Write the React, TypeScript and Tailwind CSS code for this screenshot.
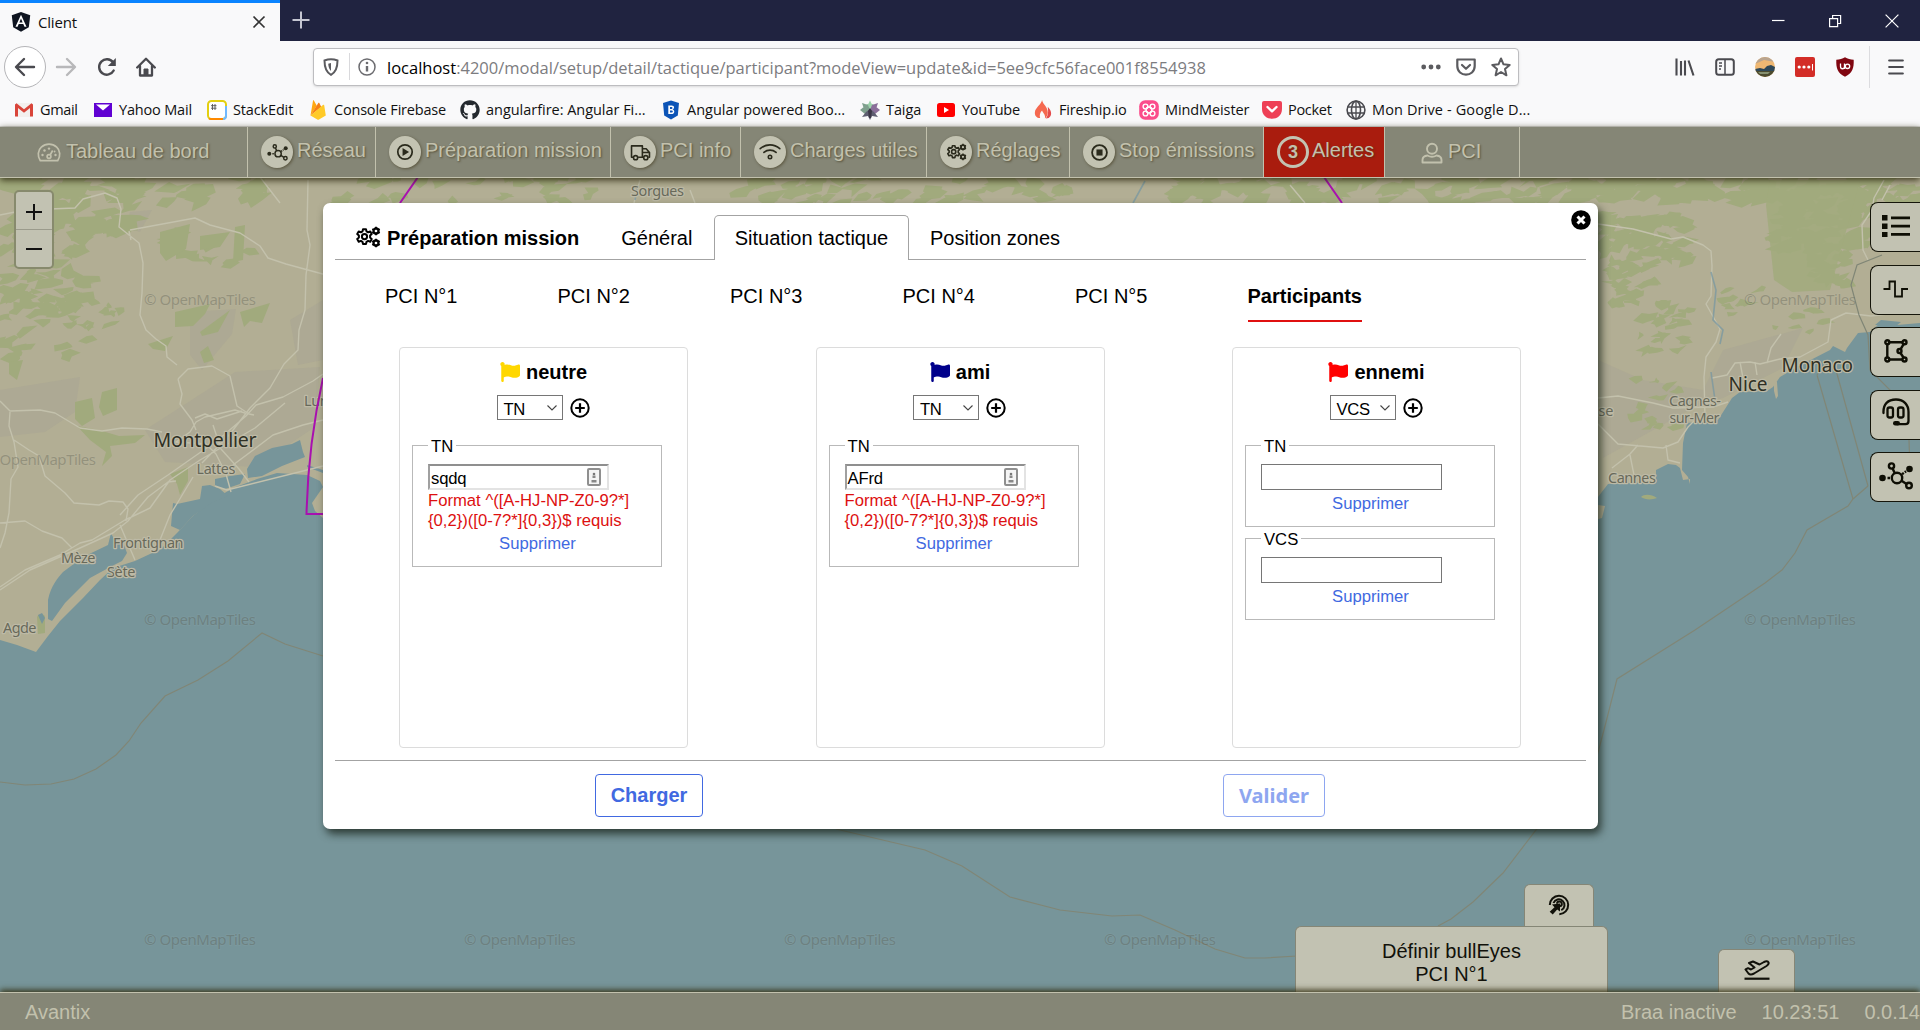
import React from "react";
import { FaGithub, FaFlag } from "react-icons/fa";

type IconProps = { className?: string };

/* ---------- line icons ---------- */

const Gears = ({ className = "w-5 h-5" }: IconProps) => (
  <svg viewBox="0 0 26 22" className={className} fill="none" stroke="currentColor" strokeWidth="2">
    <path d="M8 3.2h3l.5 2.2 1.6.9 2.2-.8 1.4 2.6-1.6 1.5v2l1.6 1.5-1.4 2.6-2.2-.8-1.6.9-.5 2.2H8l-.5-2.2-1.6-.9-2.2.8-1.5-2.6 1.7-1.5v-2L2.200 8.100l1.500-2.600 2.200.8 1.600-.9z" strokeLinejoin="round" />
    <circle cx="9.500" cy="10.600" r="2.600" />
    <circle cx="21" cy="5" r="2.500" strokeWidth="2.300" />
    <circle cx="21" cy="17" r="2.500" strokeWidth="2.300" />
    <path d="M21 .8v1.500M21 7.700v1.500M17.300 2.900l1.300.8M23.400 6.300l1.300.8M17.300 7.100l1.300-.8M23.400 3.700l1.300-.8M21 12.800v1.500M21 19.700v1.500M17.300 14.900l1.300.8M23.400 18.300l1.300.8M17.300 19.100l1.300-.8M23.400 15.700l1.300-.8" strokeWidth="1.800" />
  </svg>
);

const Network = ({ className = "w-5 h-5" }: IconProps) => (
  <svg viewBox="0 0 34 28" className={className} fill="none" stroke="currentColor" strokeWidth="2.400">
    <circle cx="18" cy="16" r="5.200" />
    <circle cx="12.500" cy="4" r="2.600" />
    <circle cx="30" cy="23.500" r="2.800" />
    <circle cx="3.500" cy="16" r="3.300" fill="currentColor" stroke="none" />
    <circle cx="30.500" cy="7" r="3.300" fill="currentColor" stroke="none" />
    <path d="M13.600 6.500l2.200 4.800M22.600 18.700l4.900 3.200M8.500 16h2.500M23 12.200l1.800-1.300" />
    <path d="M25.800 10.200l1.200-.9" />
  </svg>
);

const Play = ({ className = "w-5 h-5" }: IconProps) => (
  <svg viewBox="0 0 20 20" className={className}>
    <circle cx="10" cy="10" r="8" fill="none" stroke="currentColor" strokeWidth="1.900" />
    <path d="M7.300 5.600v8.800l7.200-4.400z" fill="currentColor" />
  </svg>
);

const Stop = ({ className = "w-5 h-5" }: IconProps) => (
  <svg viewBox="0 0 20 20" className={className}>
    <circle cx="10" cy="10" r="7.800" fill="none" stroke="currentColor" strokeWidth="1.900" />
    <rect x="6.800" y="6.800" width="6.400" height="6.400" fill="currentColor" />
  </svg>
);

const Truck = ({ className = "w-5 h-5" }: IconProps) => (
  <svg viewBox="0 0 22 18" className={className} fill="none" stroke="currentColor" strokeWidth="1.700">
    <path d="M3.200 14H1.500V2h11.500v12H8.500M13 5h4l3.500 4v5h-1.200M14 14h-1M13 9h7" strokeLinejoin="round" />
    <circle cx="5.800" cy="14.500" r="2.200" />
    <circle cx="16.600" cy="14.500" r="2.200" />
  </svg>
);

const Wifi = ({ className = "w-5 h-5" }: IconProps) => (
  <svg viewBox="0 0 22 18" className={className} fill="none" stroke="currentColor" strokeWidth="1.600" strokeLinecap="round">
    <path d="M1.200 5.700C6.900.6 15.100.6 20.800 5.700M4.900 9.400c3.600-3 8.600-3 12.200 0" />
    <circle cx="11" cy="14" r="1.700" />
  </svg>
);

const Gauge = ({ className = "w-6 h-6" }: IconProps) => (
  <svg viewBox="0 0 24 20" className={className} fill="none" stroke="currentColor" strokeWidth="1.700">
    <path d="M3.300 17.700C.2 13 .8 7.300 4.300 4.200c4.500-4 11-4 15.400 0 3.500 3.100 4.100 8.800 1 13.500z" strokeLinejoin="round" />
    <circle cx="12" cy="13.500" r="1.900" />
    <path d="M13.100 12l2.600-4.500" />
    <g fill="currentColor" stroke="none">
      <circle cx="5.500" cy="12" r="1.200" /><circle cx="7.500" cy="7.500" r="1.200" /><circle cx="12" cy="5.600" r="1.200" /><circle cx="18.500" cy="12" r="1.200" /><circle cx="17.600" cy="8.500" r=".9" />
    </g>
  </svg>
);

const Person = ({ className = "w-5 h-5" }: IconProps) => (
  <svg viewBox="0 0 22 22" className={className} fill="none" stroke="currentColor" strokeWidth="1.900">
    <circle cx="11" cy="6.800" r="5" />
    <path d="M6.500 13.500c-3 .3-5 2-5 4.500v2.500h19V18c0-2.500-2-4.200-5-4.500-2.700 1.600-6.300 1.600-9 0z" strokeLinejoin="round" />
  </svg>
);

const PlusCircle = () => (
  <svg viewBox="0 0 20 20" className="h-5 w-5" fill="none" stroke="black">
    <circle cx="10" cy="10" r="8.700" strokeWidth="2" />
    <path d="M10 5.200v9.600M5.200 10h9.600" strokeWidth="2.200" />
  </svg>
);

/* ---------- map ---------- */

function mulberry(seed: number) {
  let a = seed;
  return () => {
    a = (a + 0x6d2b79f5) | 0;
    let t = Math.imul(a ^ (a >>> 15), 1 | a);
    t = (t + Math.imul(t ^ (t >>> 7), 61 | t)) ^ t;
    return ((t ^ (t >>> 14)) >>> 0) / 4294967296;
  };
}

/* Scattered woodland patches: [x, y, width, height, count, size] */
const woods: number[][] = [
  [0, 177, 130, 60, 60, 22], [0, 230, 95, 80, 40, 17], [0, 290, 70, 70, 20, 15], [70, 290, 50, 50, 12, 11],
  [130, 178, 130, 24, 18, 18], [160, 230, 105, 34, 10, 15], [325, 177, 270, 26, 26, 15], [740, 177, 330, 26, 46, 16],
  [1180, 177, 420, 26, 80, 20], [1598, 178, 170, 20, 40, 22], [1605, 215, 85, 50, 44, 17], [1602, 265, 60, 40, 24, 14],
  [1630, 305, 60, 50, 20, 12], [1770, 180, 100, 70, 70, 18], [1810, 240, 35, 45, 30, 13], [1850, 177, 70, 40, 30, 18],
  [1720, 290, 40, 30, 9, 11], [1765, 310, 65, 24, 7, 10], [1628, 375, 50, 55, 13, 11], [1770, 220, 30, 25, 6, 12],
];

function woodlandPath() {
  const rnd = mulberry(29);
  let d = "";
  for (const [x, y, w, h, n, s] of woods) {
    for (let i = 0; i < n; i++) {
      const cx = x + rnd() * w;
      const cy = y + rnd() * h;
      const pts = 5 + Math.floor(rnd() * 4);
      for (let k = 0; k < pts; k++) {
        const ang = (k / pts) * Math.PI * 2 + rnd() * 0.6;
        const r = s * (0.15 + rnd() * 0.85);
        const px = cx + Math.cos(ang) * r - Math.sin(ang) * r * 0.3;
        const py = cy + Math.sin(ang) * r * 0.55;
        d += (k ? "L" : "M") + px.toFixed(1) + " " + py.toFixed(1);
      }
      d += "Z";
    }
  }
  return d;
}

const woodland = woodlandPath();

const watermarks = [
  [144, 305], [-16, 465], [1744, 305], [144, 625], [1744, 625], [144, 945], [464, 945], [784, 945], [1104, 945], [1744, 945],
];

type Place = { t: string; x: number; y: number; s: number; c: string; w: number };
const places: Place[] = [
  { t: "Montpellier", x: 153.500, y: 447, s: 19.500, c: "#2f3024", w: 103 },
  { t: "Lattes", x: 196.500, y: 474, s: 14.500, c: "#68695a", w: 39 },
  { t: "Frontignan", x: 113, y: 547.500, s: 14.500, c: "#68695a", w: 70.500 },
  { t: "Mèze", x: 61, y: 562.500, s: 14.500, c: "#68695a", w: 34.500 },
  { t: "Sète", x: 107, y: 577, s: 14.500, c: "#68695a", w: 28.500 },
  { t: "Agde", x: 3, y: 632.500, s: 14.500, c: "#68695a", w: 33.500 },
  { t: "Lunel", x: 304, y: 405.500, s: 14.500, c: "#68695a", w: 36 },
  { t: "Sorgues", x: 631, y: 195.500, s: 14.500, c: "#68695a", w: 53 },
  { t: "Monaco", x: 1781.500, y: 371.500, s: 19, c: "#2f3024", w: 71.500 },
  { t: "Nice", x: 1728.500, y: 390.500, s: 19, c: "#2f3024", w: 39 },
  { t: "Cagnes-", x: 1669, y: 405.500, s: 14.500, c: "#68695a", w: 52 },
  { t: "sur-Mer", x: 1669.500, y: 422.500, s: 14.500, c: "#68695a", w: 50 },
  { t: "Cannes", x: 1608, y: 482.500, s: 14.500, c: "#68695a", w: 48 },
  { t: "Grasse", x: 1568, y: 415.500, s: 14.500, c: "#68695a", w: 45.500 },
];

const MapView = () => (
  <svg viewBox="0 178 1920 814" className="absolute inset-0 h-full w-full" preserveAspectRatio="none">
    <rect y="177" width="1920" height="815" fill="#77959a" />
    <path d="M0 177H1920V323L1897 325 1880 323 1870 332 1858 333 1847 348 1845 352 1833 346 1830 350 1797 367 1780 377 1773 387 1767 391 1740 392 1732 398 1718 420 1687 423 1683 443 1682 470 1688 477 1690 484 1690 479 1683 480 1680 468 1676 465 1668 464 1656 470 1656 482 1608 484 1598 497 1598 520H330L323 518 315 511 312 503 323 487 320 481 307 475 277 473 257 479 233 488 213 500 193 516 177 533 160 550 150 554 135 561 113 568 100 580 83 598 60 621 48 636 36 652 17 645 0 640Z" fill="#b2ae94" />
    <g fill="#aba893">
      <path d="M0 390l80-13-5 35-30 20-45 5zM130 212l22-2-12 22-14-4zM190 312l46-3-4 25-30 36-12-15zM290 320l33-20v60l-25 5zM145 430l90-58 85-5-5 60-60 40-90-5z" opacity=".8" />
      <path d="M1598 360l45 20 60 10 20-40 80-22-20 40-60 30-30 10-90 50z" opacity=".8" />
    </g>
    <path d={woodland} fill="#a1aa7d" />
    <g fill="#a1aa7d">
      <path d="M1770 180h90l-30 110-38 2-18-12-8-75z" opacity=".85" />
      <path d="M75 402l17-4 3 20-13 8-7-7zM102 392l15-4v22l-14 6-4-9zM77 426l22 4 20 6 26-1-10 8-25 3 2 10-10 10 4-14-16-12zM175 312l35-8-5 10-12 12-18 1zM200 332l30-22-12 22-16 4zM240 312l30-9-8 20-12-2-6 6zM148 344l25-8-8 15-12-2zM160 232l30-8-4 25-20 12-6-8zM200 236l30-4-10 15-20 3zM9 362l14-2-6 20-8-6z" />
      <path d="M235 227l10-2-2 35-10 2zM200 352l8-6 6 14-10 3zM170 474l18-7v14l-8 14-3-11z" />
      <path d="M37 617c2-4 8-3 8 0v16l-7 1zM1641 497c3-3 10-3 16 1-5 2-12 2-16-1z" />
    </g>
    <g fill="#77959a">
      <path d="M247 469l8-13 17-8 20-4 8-4 3 12 2 5-23 9-20 10-14 2zM215 479l15-3 15-2-5 10-15 5-10-3zM173 503l4 1 23-5 2-13 8-1 10 4 8 7-15 6-20 14-13 14-9-4zM48 600c3-15 10-22 15-28l20-15 25-12 3-12 5 10 8 2 3 8-5 8-10 5-22 12-25 25-13 18-4-2zM307 467l16 6v-3l-16-5z" />
      <path d="M38 615l4-2 3 5-3 6zM1875 325l6-5 20 2-5 4z" />
    </g>
    <path d="M1774 380l3 2 1 14-2 3-2-8zM1598 505l7 1-3 12-4 1z" fill="#b2ae94" />
    <g fill="none" stroke="#c3c1ac" strokeWidth="1.400" strokeLinejoin="round">
      <path d="M0 215l25-5 50-2 8-9 22-6 12 5 4 11-2 18 10 8 10 8 4 20-1 30-2 22 6 15 10 9 10 7 1 11 10 8M130 230l65-12 15 7 30 8 20 13 8 12 18 6 22 6 22 6h13M129 231l2 9M308 180l-1 50 3 15-4 30-1 35-6 20-1 20-14 14-14 24-20 20-20 26-28 29M178 379l10-10 24-3 18 10 7 30 12 8 5 1M178 379l4 15-2 10 12 16 4 10M0 401l10 10 30-1 15 3 25 15 22 3 20-3 25 1 15 3M10 412l-1 14 5 16 4 25-7 12-2 34-4 20-5 15M14 440l15 10 10 6 6 20 20 17 9 10 25 2 10-4 14 1 5 7-2 12M0 587l25-17 35-15 20-12 12-3 33-20 25-12 20-28 30-20 55-32 30-25M0 590l30-20 50-22 33-15 15-12 20-24 20-15 8-1M120 515l18-20 30-20 50-35 28-24 10-11 27-8 30-16 10-7M245 413l-10-3-30 7-9 5-6 10-14 10 30 2 10 10 10 20 5 18M195 418l10-4 12 5 25-8M213 425l8 24 18 20 10 13M160 540l10-25 8-13 15-25M215 486l12 4 100-25M120 525l15 35M0 523l25-2 17 10 20 7 10 10" />
      <path d="M323 420l-20 5-30 10-40 30" />
      <path d="M1598 224l35 5 38 10 12-2 20 8 8 6 1 15-1 30-5 8 14 25-4 13-10 15-2 20 1 40M1598 398l20-2 35 7 20 5 40-1 15-5M1712 378l15-3 8-12 15-1 10 2 20-5 20-2 28-15 3-22 15-7 25 3 40-5 24 2M1740 362l3 16M1755 362l2 13M1767 363l4-15 10-14M1598 424l20 20 45 4 15-6 10-15 10-10M1612 468l18-14 8-9M1630 455l4 20M1666 445l2 15 12 3M1884 180l-10 18-2 12-10 15 1 25 5 10" />
      <path d="M260 177l20 26M640 180l-6 23M690 190l5 13M1290 185l15 18M1890 185l-8 15" />
    </g>
    <path d="M1711 272l5 18-3 30 10 10-3 14M1133 203l12-22M635 200l2-12M1711 372l4 28" fill="none" stroke="#7396a3" strokeWidth="1.600" opacity=".7" />
    <g fill="none" stroke="#808676" strokeWidth="1.200">
      <path d="M0 782L25 785 51 784 74 779 96 769 116 755 129 741 141 723 165 696 198 680 228 661 262 633 285 644 323 656" />
      <path d="M836 829L925 850 962 866 1010 897 1060 910 1112 916 1140 915 1175 930 1215 949 1245 958 1265 958 1297 956" />
      <path d="M1438 926L1451 919 1473 902 1503 873 1536 830 1596 760 1604 730 1617 679 1695 630 1765 583 1782 570 1795 553 1807 530 1848 506 1853 499 1868 486" />
      <path d="M1817 375l36 124M1868 486l-34-123M1817 375l8-12 8 6M1882 255l-25 10-6 20 8 30 9 20 2 35 20 20 19 50M1909 440l1 30" />
    </g>
    <g fontFamily="'Noto Sans', 'Open Sans', sans-serif">
      {watermarks.map(([x, y], i) => (
        <text key={i} x={x} y={y - 0.5} fontSize="15" fill="#5a5b50" opacity=".34" textLength="112" stroke="#fff" strokeOpacity=".12" strokeWidth="1.500" paintOrder="stroke">© OpenMapTiles</text>
      ))}
      {places.map((p) => (
        <text key={p.t} x={p.x} y={p.y} fontSize={p.s} fill={p.c} textLength={p.w} stroke="#bdbaa6" strokeWidth="2.600" strokeLinejoin="round" paintOrder="stroke">{p.t}</text>
      ))}
    </g>
    <path d="M418 177L400 203M323 378Q308 445 306.500 514H323M1324 177l18 26" fill="none" stroke="#a910b0" strokeWidth="2" />
  </svg>
);

/* ---------- browser chrome ---------- */

const TabStrip = () => (
  <div className="flex h-[41px] items-stretch bg-[#202340]">
    <div className="flex w-[280px] items-center border-t-[3px] border-[#0a84ff] bg-[#f9f9fa] pl-[11px] pr-[14px]">
      <svg viewBox="0 0 20 21" className="h-[20px] w-5">
        <path d="M10 0l9.700 3.400-1.500 12.700L10 20.700l-8.200-4.600L.3 3.400z" fill="#0e1420" />
        <path d="M10 2.800L4.200 15.500h2.200l1.200-2.900h4.800l1.200 2.900h2.200zm0 4.100l1.700 4H8.300z" fill="#fff" />
      </svg>
      <span className="ml-[7px] grow text-[15px] tracking-[-0.200px] text-[#111]">Client</span>
      <svg viewBox="0 0 14 14" className="h-[14px] w-[14px]" stroke="#333" strokeWidth="1.700"><path d="M1.500 1.500l11 11M12.500 1.500l-11 11" /></svg>
    </div>
    <svg viewBox="0 0 18 18" className="ml-3 mt-[11px] h-[18px] w-[18px]" stroke="#c5c6d2" strokeWidth="2"><path d="M9 .5v17M.5 9h17" /></svg>
    <div className="grow" />
    <div className="flex items-center gap-[43px] pr-[21px] text-white">
      <svg viewBox="0 0 14 14" className="h-[14px] w-[14px]" stroke="currentColor" strokeWidth="1.200"><path d="M1 6.500h12.500" /></svg>
      <svg viewBox="0 0 14 14" className="h-[14px] w-[14px]" stroke="currentColor" strokeWidth="1.200" fill="none"><path d="M1.600 4.600h8v8h-8zM4.600 4.500v-3h8v8h-3" /></svg>
      <svg viewBox="0 0 14 14" className="h-[14px] w-[14px]" stroke="currentColor" strokeWidth="1.200"><path d="M.6.6l12.800 12.800M13.400.6L.6 13.400" /></svg>
    </div>
  </div>
);

const Toolbar = () => (
  <div className="flex h-[51px] items-center bg-[#f9f9fa] pl-1 pr-[12px] text-[#4a4a4f]">
    <div className="flex h-[42px] w-[42px] items-center justify-center rounded-full border border-[#b5b5b8] bg-white">
      <svg viewBox="0 0 22 20" className="h-5 w-[22px]" fill="none" stroke="currentColor" strokeWidth="2.400" strokeLinecap="round" strokeLinejoin="round"><path d="M20 10H2.500M10 2L2 10l8 8" /></svg>
    </div>
    <svg viewBox="0 0 22 20" className="ml-[9px] h-5 w-[22px] text-[#b8b8ba]" fill="none" stroke="currentColor" strokeWidth="2.400" strokeLinecap="round" strokeLinejoin="round"><path d="M2 10h17.500M12 2l8 8-8 8" /></svg>
    <svg viewBox="0 0 20 20" className="ml-[20px] h-5 w-5" fill="none" stroke="currentColor" strokeWidth="2.400"><path d="M16.700 13.500A7.700 7.700 0 1 1 16 5.300" strokeLinecap="round" /><path d="M18.800 1v8h-8z" fill="currentColor" stroke="none" /></svg>
    <svg viewBox="0 0 20 20" className="ml-[19px] h-5 w-5" fill="none" stroke="currentColor" strokeWidth="2.300" strokeLinejoin="round" strokeLinecap="round"><path d="M1.200 10.500L10 1.700l8.800 8.800M4 9v9.500h12V9" /><path d="M8 18v-6h4v6" fill="currentColor" strokeWidth="1" /></svg>

    <div className="ml-[157px] flex h-[38px] w-[1206px] items-center rounded-sm border border-[#bdbdc0] bg-white pl-[9px] pr-[7px] shadow-sm">
      <svg viewBox="0 0 16 18" className="h-[18px] w-4" fill="none" stroke="#5b5b5f" strokeWidth="2"><path d="M1.500 2.500Q8 0 14.500 2.500C14.500 10 12.500 14.500 8 16.800 3.500 14.500 1.500 10 1.500 2.500z" /><path d="M8 5v8c-1.500-1.500-2.500-3.500-2.800-7.300z" fill="#5b5b5f" stroke="none" /></svg>
      <div className="ml-[10px] h-[27px] w-px bg-[#d9d9dc]" />
      <svg viewBox="0 0 18 18" className="ml-[8px] h-[18px] w-[18px]" fill="none" stroke="#6b6b6f"><circle cx="9" cy="9" r="8" strokeWidth="1.500" /><path d="M9 8v5.500" strokeWidth="2.400" /><circle cx="9" cy="5" r="1.300" fill="#6b6b6f" stroke="none" /></svg>
      <div className="ml-[11px] grow whitespace-nowrap pt-[3px] text-[16.500px] text-[#7c7c80]"><span className="text-black">localhost</span>:4200/modal/setup/detail/tactique/participant?modeView=update&amp;id=5ee9cfc56face001f8554938</div>
      <svg viewBox="0 0 20 6" className="h-[6px] w-5" fill="#5b5b5f"><circle cx="2.700" cy="3" r="2.400" /><circle cx="10" cy="3" r="2.400" /><circle cx="17.300" cy="3" r="2.400" /></svg>
      <svg viewBox="0 0 20 18" className="ml-[15px] h-[18px] w-5" fill="none" stroke="#5b5b5f" strokeWidth="2.200" strokeLinejoin="round" strokeLinecap="round"><path d="M1.300 1.500h17.400V8c0 11.500-17.400 11.500-17.400 0z" /><path d="M6 7l4 3.800L14 7" /></svg>
      <svg viewBox="0 0 20 20" className="ml-[15px] h-5 w-5" fill="none" stroke="#5b5b5f" strokeWidth="2" strokeLinejoin="round"><path d="M10 1.500l2.500 5.800 6.200.6-4.700 4.100 1.400 6.300L10 15l-5.400 3.300L6 12 1.300 7.900l6.200-.6z" /></svg>
    </div>

    <div className="ml-auto flex items-center">
      <svg viewBox="0 0 20 18" className="h-[18px] w-5" stroke="currentColor" strokeWidth="2.100"><path d="M1.500.5v17M6 3v14.500M10 2.500v15M13.500 2.500l5 15" /></svg>
      <svg viewBox="0 0 20 18" className="ml-5 h-[18px] w-5" fill="none" stroke="currentColor" strokeWidth="2"><rect x="1.200" y="1.200" width="17.600" height="15.600" rx="2.500" /><path d="M10 1v16M4 5h3M4 8h3M4 11h2" strokeWidth="1.500" /></svg>
      <svg viewBox="0 0 20 20" className="ml-5 h-5 w-5">
        <clipPath id="avatar"><circle cx="10" cy="10" r="10" /></clipPath>
        <g clipPath="url(#avatar)"><rect width="20" height="20" fill="#efb873" /><path d="M0 0h20v5L9 3 0 7z" fill="#b9a48e" /><path d="M0 12l5-1 4 1 3-3 4-1 4 2v4H0z" fill="#2f4858" /><path d="M0 14h20v6H0z" fill="#4b4a2e" /><path d="M3 15h12l-2 2H5z" fill="#86906f" /></g>
      </svg>
      <svg viewBox="0 0 20 20" className="ml-5 h-5 w-5"><rect width="20" height="20" rx="2" fill="#d32d27" /><g fill="#fff"><circle cx="4.200" cy="10" r="1.600" /><circle cx="9" cy="10" r="1.600" /><circle cx="13.800" cy="10" r="1.600" /><path d="M17 7h1v6.500h-1z" /></g></svg>
      <svg viewBox="0 0 18 20" className="ml-[21px] h-5 w-[18px]"><path d="M9 .3c2.500 1.600 5.500 2.400 8.700 2.400C18 11 16.500 16 9 19.800 1.500 16 0 11 .3 2.700 3.500 2.700 6.500 1.900 9 .3z" fill="#800610" /><path d="M4.500 6.500v3c0 3 4 3 4 0v-3M8.500 12v-3.500" stroke="#fff" strokeWidth="1.300" fill="none" /><circle cx="11.500" cy="9.300" r="2.200" stroke="#fff" strokeWidth="1.300" fill="none" /></svg>
      <div className="ml-[15px] h-[42px] w-px bg-[#dcdcdf]" />
      <svg viewBox="0 0 16 16" className="ml-[18px] mr-1 h-4 w-4" stroke="currentColor" strokeWidth="2.200" strokeLinecap="round"><path d="M1.200 1.500h13.600M1.200 8h13.600M1.200 14.500h13.600" /></svg>
    </div>
  </div>
);

const Bookmark = ({ icon, label, className }: { icon: React.ReactNode; label: string; className: string }) => (
  <div className={"flex shrink-0 items-center whitespace-nowrap text-[14.500px] text-[#111] " + className}>
    <span className="mr-[6px] flex w-5 justify-center">{icon}</span>
    {label}
  </div>
);

const Bookmarks = () => (
  <div className="flex h-[35px] items-center border-b border-[#dadad8] bg-[#f9f9fa] pl-[14px] pt-[1px]">
    <Bookmark className="w-[79px] tracking-[-0.350px]" label="Gmail" icon={<svg viewBox="0 0 18 14" className="h-[14px] w-[18px]"><path d="M1 0h16v14H1z" fill="#f3f0ee" /><path d="M0 1.500v12h3V5l6 4.800L15 5v8.500h3v-12L16.500.3 9 6.300 1.500.3z" fill="#d9453a" /></svg>} />
    <Bookmark className="w-[114px] tracking-[-0.170px]" label="Yahoo Mail" icon={<svg viewBox="0 0 18 14" className="h-[14px] w-[18px]"><path d="M0 0h18v14H0z" fill="#6001d2" /><path d="M2 1.500h14L9 7.500z" fill="#fff" /></svg>} />
    <Bookmark className="w-[101px] tracking-[-0.150px]" label="StackEdit" icon={<svg viewBox="0 0 20 20" className="h-5 w-5"><rect x="1" y="1" width="18" height="18" rx="3.500" fill="#fff" stroke="#e3cf10" strokeWidth="2" /><path d="M19 6v10q0 3-3 3" fill="none" stroke="#6fb8ff" strokeWidth="2" /><path d="M2 18.600q1 .4 2 .4h12" stroke="#ff8a00" strokeWidth="2" fill="none" /><path d="M5.500 4v6M8 4v6M4 5.700h5.500M4 8.200h5.500" stroke="#555" strokeWidth=".9" /></svg>} />
    <Bookmark className="w-[152px] tracking-[-0.200px]" label="Console Firebase" icon={<svg viewBox="0 0 16 20" className="h-5 w-4"><path d="M.5 15.500L3 .8c.1-.5.8-.6 1-.1l2.800 5z" fill="#ffa712" /><path d="M.5 15.500L8.300 3c.2-.5.8-.5 1 0l2 4z" fill="#f57f17" /><path d="M.5 15.500L13.200 4.800c.4-.3.9-.1 1 .4l1.600 10.300-6.800 4c-.5.3-1.200.3-1.700 0z" fill="#ffca28" /></svg>} />
    <Bookmark className="w-[201px] tracking-[-0.030px]" label="angularfire: Angular Fi..." icon={<FaGithub className="h-5 w-5 text-[#24292e]" />} />
    <Bookmark className="w-[199px] tracking-[0]" label="Angular powered Boo..." icon={<svg viewBox="0 0 18 20" className="h-5 w-[18px]"><path d="M9 .5L17 3l-1.200 12.500L9 19.500l-6.800-4L1 3z" fill="#0c54b7" /><path d="M6.300 5.500h3.400c3 0 3 3.300.8 3.900 2.700.5 2.300 4.600-.9 4.600H6.300zM8 7v2h1.500c1.300 0 1.300-2 0-2zm0 3.400v2.200h1.700c1.500 0 1.500-2.200 0-2.200z" fill="#fff" /></svg>} />
    <Bookmark className="w-[76px] tracking-[-0.100px]" label="Taiga" icon={<svg viewBox="0 0 20 20" className="h-5 w-5"><path d="M10 .5l2.500 5h-5z M6.500 4h7v8h-7z" fill="#9ed3ac" /><path d="M2 3l6 2 2 5-6-1zM0 10l5-4 4 4-4 4z" fill="#7fa08d" /><path d="M18 3l-6 2-2 5 6-1zM20 10l-5-4-4 4 4 4z" fill="#8a6e99" /><path d="M10 9l4 3 4 5-6-1-2 4-2-4-6 1 4-5z" fill="#5d5d70" /><path d="M10 8l2 3-1 7h-2l-1-7z" fill="#3c3747" /></svg>} />
    <Bookmark className="w-[97px] tracking-[-0.250px]" label="YouTube" icon={<svg viewBox="0 0 18 14" className="h-[14px] w-[18px]"><rect width="18" height="14" rx="2.500" fill="#f00" /><path d="M7 4v6l5-3z" fill="#fff" /></svg>} />
    <Bookmark className="w-[106px] tracking-[-0.200px]" label="Fireship.io" icon={<svg viewBox="0 0 18 20" className="h-[19px] w-[18px]"><path d="M8 0c1 5 6 7 6 13 0 3-1 5-3 6.500C12 15 9 14 8 11c-2 2-3 5-2 8C2 19 0 16 .5 12.500 1 8 7 5 8 0z" fill="#f5684f" /><path d="M14 7c4 4 5 9 1 12l-3 .5c3-4 2.500-8 2-12.500z" fill="#e44b4b" /></svg>} />
    <Bookmark className="w-[123px] tracking-[-0.100px]" label="MindMeister" icon={<svg viewBox="0 0 20 20" className="h-5 w-5"><rect x=".2" y=".2" width="19.600" height="19.600" rx="6" fill="#fb4c8b" /><g fill="none" stroke="#fff" strokeWidth="1.400"><ellipse cx="10" cy="10" rx="3" ry="3" /><circle cx="6.500" cy="6.500" r="2.400" /><circle cx="13.500" cy="6.500" r="2.400" /><circle cx="6.500" cy="13.500" r="2.400" /><circle cx="13.500" cy="13.500" r="2.400" /></g></svg>} />
    <Bookmark className="w-[84px] tracking-[-0.300px]" label="Pocket" icon={<svg viewBox="0 0 20 18" className="h-[18px] w-5"><path d="M2 0h16q2 0 2 2v6c0 13-20 13-20 0V2q0-2 2-2z" fill="#ee4056" /><path d="M5.500 6l4.500 4.300L14.500 6" fill="none" stroke="#fff" strokeWidth="2.400" strokeLinecap="round" strokeLinejoin="round" /></svg>} />
    <Bookmark className="tracking-[0.130px]" label="Mon Drive - Google D..." icon={<svg viewBox="0 0 20 20" className="h-5 w-5" fill="none" stroke="#4a4a4f" strokeWidth="1.600"><circle cx="10" cy="10" r="8.900" /><ellipse cx="10" cy="10" rx="4.500" ry="8.900" /><path d="M10 1v18M1.500 7h17M1.500 13h17" strokeWidth="1.300" /></svg>} />
  </div>
);

/* ---------- application nav bar ---------- */

const Disc = ({ children }: { children: React.ReactNode }) => (
  <span className="mr-1 flex h-8 w-8 shrink-0 items-center justify-center rounded-full bg-[#c3c3b2] text-[#2a2a1c] shadow-[1px_1px_3px_rgba(50,40,10,0.5)]">{children}</span>
);

const NavItem = ({ className, icon, label }: { className: string; icon: React.ReactNode; label: string }) => (
  <div className={"flex shrink-0 items-center whitespace-nowrap border-r border-[#c2c1ad] " + className}>
    {icon}
    <span className="-mt-[4px]">{label}</span>
  </div>
);

const NavBar = () => (
  <div className="relative z-10 flex h-[51px] border-b border-[#c2c1ad] bg-[#858676] text-[20px] text-[#c2c1ad] shadow-[0_2px_7px_rgba(40,35,10,0.9)] [text-shadow:1px_1px_2px_rgba(60,50,20,0.6)]">
    <NavItem className="w-[248px] pl-[37px] pt-[1px]" label="Tableau de bord" icon={<Gauge className="mr-[5px] h-5 w-6" />} />
    <NavItem className="w-[128px] pl-[13px]" label="Réseau" icon={<Disc><Network className="h-[17px] w-[21px]" /></Disc>} />
    <NavItem className="w-[235px] pl-[13px]" label="Préparation mission" icon={<Disc><Play className="h-[18px] w-[18px]" /></Disc>} />
    <NavItem className="w-[130px] pl-[13px]" label="PCI info" icon={<Disc><Truck className="h-[17px] w-[21px]" /></Disc>} />
    <NavItem className="w-[186px] pl-[13px]" label="Charges utiles" icon={<Disc><Wifi className="h-[18px] w-[22px]" /></Disc>} />
    <NavItem className="w-[143px] pl-[13px]" label="Réglages" icon={<Disc><Gears className="h-[18px] w-[21px]" /></Disc>} />
    <NavItem className="w-[194px] pl-[13px]" label="Stop émissions" icon={<Disc><Stop className="h-[19px] w-[19px]" /></Disc>} />
    <NavItem
      className="w-[121px] bg-[#a91c0e] pl-[13px]"
      label="Alertes"
      icon={<span className="mr-[3px] flex h-8 w-8 shrink-0 items-center justify-center rounded-full border-[3px] border-[#c3c3b2] text-[18px] font-bold">3</span>}
    />
    <NavItem className="w-[135px] pl-9 pt-[1px]" label="PCI" icon={<Person className="mr-[5px] h-[22px] w-[22px]" />} />
  </div>
);

/* ---------- modal ---------- */

const AddRow = ({ value }: { value: string }) => (
  <div className="mt-[11px] flex items-center justify-center gap-[7px] pr-[1px]">
    <div className="flex h-[25px] w-[66px] items-center justify-between border border-[#767676] bg-white pl-[6px] pr-[5px] pt-[5px] text-[16.670px] leading-none">
      <span className="tracking-[-0.300px]">{value}</span>
      <svg viewBox="0 0 10 6" className="mb-[5px] h-[6px] w-[10px]" fill="none" stroke="#444" strokeWidth="1.100"><path d="M.5.5L5 5 9.500.5" /></svg>
    </div>
    <PlusCircle />
  </div>
);

const Field = ({ legend, value, tall }: { legend: string; value?: string; tall?: boolean }) => (
  <fieldset className={"ml-3 w-[250px] border border-[#b9b9b9] px-[15px] " + (tall ? "h-[131px]" : "h-[91px]")}>
    <legend className="px-[3px] pt-[3px] text-[16.670px] leading-[16px]">{legend}</legend>
    {value ? (
      <div className="mt-[9px] flex h-[26px] w-[181px] items-center border-2 border-b-[#e3e3e3] border-l-[#a0a0a0] border-r-[#e3e3e3] border-t-[#8f8f8f] pl-[1px] pr-[6px] text-[16.670px]">
        <span className="grow pt-[3px] tracking-[-0.200px]">{value}</span>
        <svg viewBox="0 0 14 18" className="h-[18px] w-[14px]"><rect x="1" y="1" width="12" height="16" rx="1" fill="#f4f4f4" stroke="#8f8f8f" strokeWidth="2" /><circle cx="7" cy="6" r="1.300" fill="#777" /><path d="M5.500 7.500h3V10h-3zM4.500 12h5v2.500h-5z" fill="#888" /></svg>
      </div>
    ) : (
      <div className="mt-[9px] h-[26px] w-[181px] border border-[#767676] bg-white" />
    )}
    {tall && (
      <p className="mt-[1px] whitespace-nowrap text-[16.670px] leading-5 text-[#dd1010]">
        Format ^([A-HJ-NP-Z0-9?*]<br />
        {"{0,2})([0-7?*]{0,3})$ requis"}
      </p>
    )}
    <div className={"pl-[1px] text-center text-[16.670px] leading-5 text-[#4169e1] " + (tall ? "mt-[3px]" : "mt-[4px]")}>Supprimer</div>
  </fieldset>
);

const Card = ({ name, color, select, children }: { name: string; color: string; select: string; children: React.ReactNode }) => (
  <section className="h-[401px] w-[289px] rounded border border-[#dcdcdc]">
    <h3 className="mt-[11px] flex h-[25px] items-center justify-center gap-[6px] text-[20px] font-bold">
      <FaFlag className={"h-5 w-5 " + color} />
      {name}
    </h3>
    <AddRow value={select} />
    <div className="mt-[16px]">{children}</div>
  </section>
);

const Modal = () => (
  <div className="absolute left-[323px] top-[25px] z-20 flex h-[626px] w-[1275px] flex-col rounded-[7px] bg-white px-3 text-[20px] text-black shadow-[3px_5px_9px_rgba(20,30,20,0.75)]">
    <svg viewBox="0 0 20 20" className="absolute right-[7px] top-[7px] h-5 w-5"><circle cx="10" cy="10" r="9.800" /><path d="M6.500 6.500l7 7M13.500 6.500l-7 7" stroke="#fff" strokeWidth="3" /></svg>
    <div className="flex h-[57px] shrink-0 items-end">
      <div className="flex h-[45px] w-[379px] items-center border-b border-[#a3a3a3] pl-5 pt-[2px]">
        <Gears className="-mt-[2px] h-[22px] w-[26px]" />
        <span className="ml-[6px] whitespace-nowrap font-bold">Préparation mission</span>
        <span className="ml-[42px]">Général</span>
      </div>
      <div className="flex h-[45px] w-[195px] items-center justify-center rounded-t-[5px] border border-b-0 border-[#a3a3a3]">Situation tactique</div>
      <div className="flex h-[45px] grow items-center border-b border-[#a3a3a3] pl-[21px] pt-[2px]">Position zones</div>
    </div>
    <div className="flex h-[87px] shrink-0 pl-[50px] pt-[21px]">
      {["PCI N°1", "PCI N°2", "PCI N°3", "PCI N°4", "PCI N°5"].map((t) => (
        <div key={t} className="w-[172.500px]">{t}</div>
      ))}
      <div className="h-[41px] border-b-2 border-[#e01010] font-bold">Participants</div>
    </div>
    <div className="flex shrink-0 gap-[127.500px] pl-[64px]">
      <Card name="neutre" color="text-[#ffd700]" select="TN"><Field legend="TN" value="sqdq" tall /></Card>
      <Card name="ami" color="text-[#00008b]" select="TN"><Field legend="TN" value="AFrd" tall /></Card>
      <Card name="ennemi" color="text-[#ff0000]" select="VCS">
        <Field legend="TN" />
        <div className="mt-[2px]"><Field legend="VCS" /></div>
      </Card>
    </div>
    <div className="mt-3 flex border-t border-[#a3a3a3] pl-[260px] pt-[13px]">
      <div className="flex h-[43px] w-[108px] items-center justify-center rounded border border-[#4169e1] pb-[2px] font-bold text-[#4169e1]">Charger</div>
      <div className="ml-[520px] flex h-[43px] w-[102px] items-center justify-center rounded border border-[#8ea6f0] text-[#8ea6f0]">
        <span className="text-[20px] font-bold [font-family:'Noto_Sans','Open_Sans',sans-serif]">Valider</span>
      </div>
    </div>
  </div>
);

/* ---------- floating map controls ---------- */

const sideIcons: React.ReactNode[] = [
  <svg viewBox="0 0 28 22" className="h-[22px] w-7" fill="currentColor"><path d="M0 0h5.500v5.500H0zM0 8.500h5.500V14H0zM0 17h5.500v5H0zM9 1.500h19v2.700H9zM9 9.800h19v2.700H9zM9 18h19v2.700H9z" /></svg>,
  <svg viewBox="0 0 26 18" className="h-[18px] w-[26px]" fill="none" stroke="currentColor" strokeWidth="1.800"><path d="M.5 9h6V1.500H12V16.500h7V9h6" /></svg>,
  <svg viewBox="0 0 24 24" className="h-6 w-6" fill="none" stroke="currentColor" strokeWidth="2.400"><circle cx="3.300" cy="3.300" r="2" /><circle cx="20.500" cy="3.300" r="2" /><circle cx="3.300" cy="20.500" r="2" /><circle cx="20.500" cy="20.500" r="2" /><circle cx="15.500" cy="12" r="2" /><path d="M5.500 3.300h13M3.300 5.500v13M5.500 20.500h13M19.500 5.300l-3 5M16.500 14l3 4.500" /></svg>,
  <svg viewBox="0 0 28 28" className="-mt-[4px] h-7 w-7" fill="none" stroke="currentColor" strokeWidth="2.300"><path d="M1.500 15C1 6 6 1.500 14 1.500S26.500 7 26.500 14v9q0 3.200-3 3.200H15" strokeLinecap="round" /><rect x="5.500" y="9.500" width="5.500" height="10" rx="2" /><rect x="16" y="9.500" width="5.500" height="10" rx="2" /><rect x="11" y="23" width="7" height="4.500" rx="2.200" fill="currentColor" stroke="none" /></svg>,
  <Network className="h-7 w-[34px]" />,
];

const MapControls = () => (
  <>
    <div className="absolute left-[14px] top-[12px] flex h-[79px] w-[40px] flex-col rounded-[5px] border-2 border-[#878a6d] bg-[#c2c2b2] text-black">
      <div className="flex h-[38px] items-center justify-center border-b border-[#9b9b8c] pt-[2px]"><svg viewBox="0 0 16 16" className="h-4 w-4" stroke="#111" strokeWidth="2"><path d="M8 0v16M0 8h16" /></svg></div>
      <div className="flex grow items-center justify-center"><svg viewBox="0 0 16 4" className="h-1 w-4" stroke="#111" strokeWidth="2"><path d="M0 2h16" /></svg></div>
    </div>
    <div className="absolute right-0 top-[24px] flex flex-col gap-[12.500px] text-[#0e0e04]">
      {sideIcons.map((icon, i) => (
        <div key={i} className="flex h-[50px] w-[50px] items-center justify-center rounded-l-lg border border-r-0 border-[#15150a] bg-[#c2c2b2] pb-[2px]">{icon}</div>
      ))}
    </div>
    <div className="absolute bottom-0 left-[1295px] flex w-[313px] flex-col items-end text-[#11110a]">
      <div className="mr-[14px] flex h-[42px] w-[70px] items-center justify-center rounded-t-md border border-b-0 border-[#858676] bg-[#c2c2b2] pb-[2px]">
        <svg viewBox="0 0 22 22" className="h-[22px] w-[22px]" fill="none" stroke="currentColor" strokeWidth="2"><path d="M1.800 11a9.200 9.200 0 1 1 9.500 9.200" /><path d="M5.500 9a5.700 5.700 0 1 1 7.800 7.200" /><path d="M9 9.800a2.400 2.400 0 1 1 3 2.500" /><path d="M12 9.500v8l-2.800-2-4.500 5-3-2.700 4.800-4.500-2.500-2.700z" fill="currentColor" stroke="none" /></svg>
      </div>
      <div className="flex h-[66px] w-full flex-col items-center rounded-t-md border border-b-0 border-[#858676] bg-[#c2c2b2] pt-[13px] text-[20px] leading-[23px]">
        <span>Définir bullEyes</span>
        <span>PCI N°1</span>
      </div>
    </div>
    <div className="absolute bottom-0 left-[1718px] flex h-[43px] w-[77px] items-center justify-center rounded-t-md border border-b-0 border-[#858676] bg-[#c2c2b2] pb-[2px] text-[#11110a]">
      <svg viewBox="0 0 26 20" className="h-5 w-[26px]" fill="none" stroke="currentColor" strokeWidth="2" strokeLinejoin="round"><path d="M1.500 9.500L4 8.200l3 1.300L10.500 7.500 5 3l4-1.500 6.500 3L20 2c2-1 4-.8 4.500.3s-.5 2.700-2 3.700L10 13.500c-2 1.100-4.500 1-5.500 0z" /><path d="M.5 18.700h25" strokeWidth="2.200" /></svg>
    </div>
  </>
);

const Footer = () => (
  <footer className="relative z-10 flex h-[38px] shrink-0 items-center justify-between border-t border-[#c2c1ad] bg-[#858676] pl-[25px] pt-[1px] text-[20px] text-[#c2c1ad] shadow-[0_-2px_6px_rgba(50,45,15,0.95)]">
    <span>Avantix</span>
    <div className="flex gap-[25px] whitespace-nowrap">
      <span>Braa inactive</span>
      <span>10.23:51</span>
      <span>0.0.14</span>
    </div>
  </footer>
);

export default function App() {
  return (
    <div className="flex h-[1030px] w-[1920px] flex-col overflow-hidden font-['Liberation_Sans',Arial,sans-serif]">
      <div className="shrink-0 font-['Open_Sans','Noto_Sans',sans-serif]">
        <TabStrip />
        <Toolbar />
        <Bookmarks />
      </div>
      <NavBar />
      <main className="relative grow">
        <MapView />
        <MapControls />
        <Modal />
      </main>
      <Footer />
    </div>
  );
}
